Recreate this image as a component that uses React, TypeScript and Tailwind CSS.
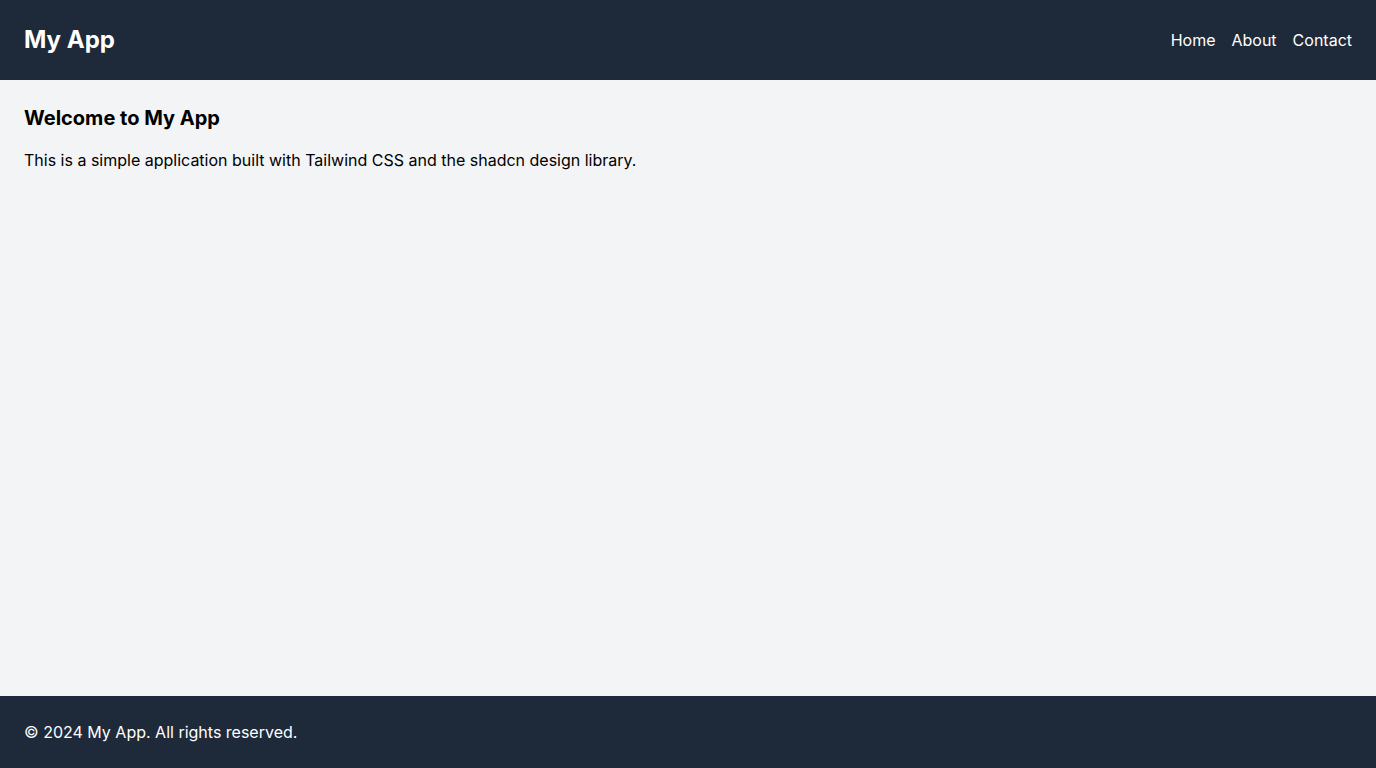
import React from "react";

export default function App() {
  return (
    <div className="flex min-h-screen flex-col bg-gray-100 font-['Inter',sans-serif]">
      <header className="flex items-center justify-between bg-gray-800 p-6 text-white">
        <h1 className="text-2xl font-bold">My App</h1>
        <nav className="flex gap-4">
          <a href="#" className="text-base">Home</a>
          <a href="#" className="text-base">About</a>
          <a href="#" className="text-base">Contact</a>
        </nav>
      </header>
      <main className="flex-1 p-6 text-black">
        <h2 className="mb-4 text-xl font-bold">Welcome to My App</h2>
        <p className="text-base">This is a simple application built with Tailwind CSS and the shadcn design library.</p>
      </main>
      <footer className="bg-gray-800 p-6 text-white">
        <p className="text-base">© 2024 My App. All rights reserved.</p>
      </footer>
    </div>
  );
}
